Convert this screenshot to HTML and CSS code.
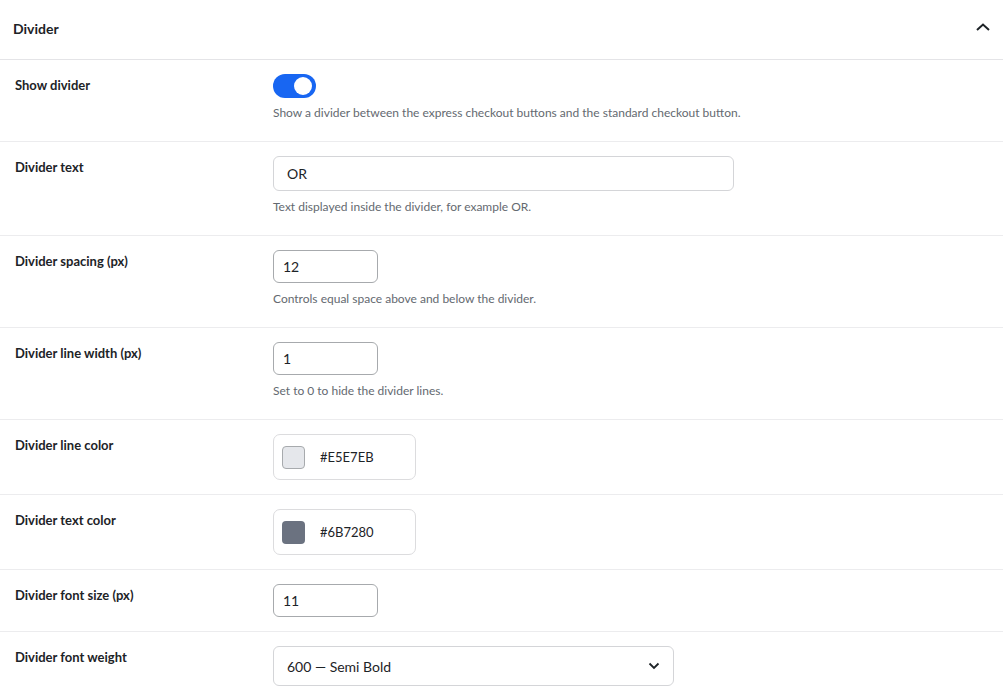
FILE: index.html
```html
<!DOCTYPE html>
<html>
<head>
<title>Checkout buttons – Divider</title>
<link rel="stylesheet" href="styles.css">
</head>
<body>

<div class="panel">
  <div class="panel-head">
    <h2>Divider</h2>
    <button class="collapse" aria-label="Collapse section">
      <svg width="14" height="8" viewBox="0 0 14 8"><path d="M1 7 L7 1.5 L13 7" fill="none" stroke="#1d2327" stroke-width="2"/></svg>
    </button>
  </div>

  <div class="row">
    <div class="label">Show divider</div>
    <div class="field">
      <span class="toggle on"><span class="knob"></span></span>
      <p class="desc">Show a divider between the express checkout buttons and the standard checkout button.</p>
    </div>
  </div>

  <div class="row">
    <div class="label">Divider text</div>
    <div class="field">
      <input class="text-input" type="text" value="OR">
      <p class="desc">Text displayed inside the divider, for example OR.</p>
    </div>
  </div>

  <div class="row">
    <div class="label">Divider spacing (px)</div>
    <div class="field">
      <input class="num-input" type="text" value="12">
      <p class="desc">Controls equal space above and below the divider.</p>
    </div>
  </div>

  <div class="row">
    <div class="label">Divider line width (px)</div>
    <div class="field">
      <input class="num-input" type="text" value="1">
      <p class="desc">Set to 0 to hide the divider lines.</p>
    </div>
  </div>

  <div class="row">
    <div class="label">Divider line color</div>
    <div class="field">
      <div class="color-pick">
        <span class="swatch light"></span>
        <span class="hex">#E5E7EB</span>
      </div>
    </div>
  </div>

  <div class="row">
    <div class="label">Divider text color</div>
    <div class="field">
      <div class="color-pick">
        <span class="swatch dark"></span>
        <span class="hex">#6B7280</span>
      </div>
    </div>
  </div>

  <div class="row">
    <div class="label">Divider font size (px)</div>
    <div class="field">
      <input class="num-input" type="text" value="11">
    </div>
  </div>

  <div class="row">
    <div class="label">Divider font weight</div>
    <div class="field">
      <div class="select">
        <span>600 — Semi Bold</span>
        <svg width="12" height="8" viewBox="0 0 12 8"><path d="M1.5 1.5 L6 6 L10.5 1.5" fill="none" stroke="#1d2327" stroke-width="1.8"/></svg>
      </div>
    </div>
  </div>
</div>

</body>
</html>
```

FILE: styles.css
```css
body {
  margin: 0;
  background: #fff;
  color: #1d2327;
  font-family: Lato, "Liberation Sans", sans-serif;
  font-size: 13px;
}

.panel {
  background: #fff;
}

.panel-head {
  display: flex;
  align-items: center;
  justify-content: space-between;
  box-sizing: border-box;
  height: 60px;
  padding: 0 13px 2px;
  border-bottom: 1px solid #e4e4e7;
}

.panel-head h2 {
  margin: 0;
  font-size: 14px;
  font-weight: 700;
}

.collapse {
  background: none;
  border: none;
  padding: 0;
  margin-top: -4px;
  cursor: pointer;
  display: flex;
}

.row {
  display: grid;
  grid-template-columns: 258px 1fr;
  padding: 14px 15px;
  border-bottom: 1px solid #ececee;
}

.label {
  font-weight: 700;
  font-size: 13px;
  line-height: 18px;
  padding-top: 2px;
}

.field {
  display: flex;
  flex-direction: column;
  align-items: flex-start;
}

.desc {
  margin: 7px 0 5px;
  color: #646970;
  font-size: 12px;
  line-height: 18px;
}

/* toggle switch */
.toggle {
  display: block;
  width: 43px;
  height: 24px;
  border-radius: 12px;
  background: #c3c4c7;
  position: relative;
  margin-bottom: -1px;
}

.toggle.on {
  background: #1866f2;
}

.toggle .knob {
  position: absolute;
  top: 3px;
  left: 3px;
  width: 18px;
  height: 18px;
  border-radius: 50%;
  background: #fff;
}

.toggle.on .knob {
  left: 21px;
}

input {
  font-family: inherit;
  color: #1d2327;
  box-sizing: border-box;
  margin: 0;
  outline: none;
}

.text-input {
  width: 461px;
  height: 35px;
  padding: 0 13px;
  font-size: 14px;
  border: 1px solid #d4d5d8;
  border-radius: 6px;
}

.num-input {
  width: 105px;
  height: 33px;
  padding: 0 9px;
  font-size: 14px;
  border: 1px solid #a7aaad;
  border-radius: 6px;
}

.color-pick {
  display: flex;
  align-items: center;
  gap: 15px;
  box-sizing: border-box;
  width: 143px;
  height: 46px;
  padding: 0 8px;
  border: 1px solid #dcdcde;
  border-radius: 7px;
}

.swatch {
  width: 23px;
  height: 23px;
  border-radius: 4px;
  box-sizing: border-box;
}

.swatch.light {
  background: #e5e7eb;
  border: 1px solid #a7aaad;
}

.swatch.dark {
  background: #6b7280;
}

.hex {
  font-size: 13px;
}

.select {
  display: flex;
  align-items: center;
  justify-content: space-between;
  box-sizing: border-box;
  width: 401px;
  height: 40px;
  padding: 0 13px;
  border: 1px solid #d4d5d8;
  border-radius: 6px;
  font-size: 14px;
}
```
